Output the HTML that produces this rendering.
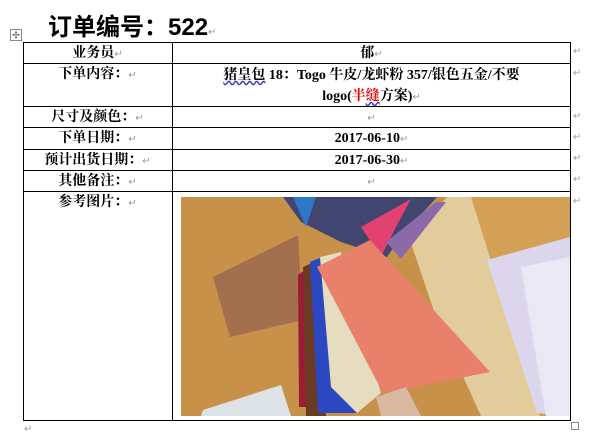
<!DOCTYPE html>
<html><head><meta charset="utf-8"><style>
body{margin:0;width:601px;height:443px;background:#fff;position:relative;overflow:hidden;font-family:"Liberation Serif","Noto Serif CJK SC",serif;}
.a{position:absolute;}
.h{background:#000;height:1px;}
.v{background:#000;width:1px;}
.t{position:absolute;font-weight:bold;font-size:14px;color:#000;white-space:nowrap;text-align:center;line-height:20px;padding-top:2px;}
.m{color:#999;font-size:10px;font-weight:normal;}
</style></head><body>
<div class="a" style="left:48px;top:7px;font:bold 24px 'Liberation Sans','Noto Sans CJK SC',sans-serif;">订单编号：522<span class="m">↵</span></div>
<div class="a" style="left:10px;top:29px;width:10px;height:10px;border:1px solid #888;font-size:9px;line-height:10px;text-align:center;color:#555;">✣</div>
<div class="a h" style="left:23px;top:42px;width:548px"></div>
<div class="a h" style="left:23px;top:63px;width:548px"></div>
<div class="a h" style="left:23px;top:106px;width:548px"></div>
<div class="a h" style="left:23px;top:127px;width:548px"></div>
<div class="a h" style="left:23px;top:149px;width:548px"></div>
<div class="a h" style="left:23px;top:170px;width:548px"></div>
<div class="a h" style="left:23px;top:191px;width:548px"></div>
<div class="a h" style="left:23px;top:420px;width:548px"></div>
<div class="a v" style="left:23px;top:42px;height:379px"></div>
<div class="a v" style="left:172px;top:42px;height:379px"></div>
<div class="a v" style="left:570px;top:42px;height:379px"></div>
<div class="t" style="left:23px;width:149px;top:42px">业务员<span class="m">↵</span></div>
<div class="t" style="left:23px;width:149px;top:63px">下单内容：<span class="m">↵</span></div>
<div class="t" style="left:23px;width:149px;top:106px">尺寸及颜色：<span class="m">↵</span></div>
<div class="t" style="left:23px;width:149px;top:127px">下单日期：<span class="m">↵</span></div>
<div class="t" style="left:23px;width:149px;top:149px">预计出货日期：<span class="m">↵</span></div>
<div class="t" style="left:23px;width:149px;top:170px">其他备注：<span class="m">↵</span></div>
<div class="t" style="left:23px;width:149px;top:191px">参考图片：<span class="m">↵</span></div>
<div class="t" style="left:173px;width:397px;top:42px">郁<span class="m">↵</span></div>
<div class="t" style="left:173px;width:397px;top:63px;line-height:21px"><span style="text-decoration:underline wavy #33c">猪皇包</span> 18：Togo 牛皮/龙虾粉 357/银色五金/不要<br>logo(<span style="color:#e00">半</span><span style="color:#e00;text-decoration:underline wavy #33c">缝</span>方案)<span class="m">↵</span></div>
<div class="t" style="left:173px;width:397px;top:106px"><span class="m">↵</span></div>
<div class="t" style="left:173px;width:397px;top:127px">2017-06-10<span class="m">↵</span></div>
<div class="t" style="left:173px;width:397px;top:149px">2017-06-30<span class="m">↵</span></div>
<div class="t" style="left:173px;width:397px;top:170px"><span class="m">↵</span></div>
<div class="a m" style="left:573px;top:46px">↵</div><div class="a m" style="left:573px;top:68px">↵</div><div class="a m" style="left:573px;top:111px">↵</div><div class="a m" style="left:573px;top:132px">↵</div><div class="a m" style="left:573px;top:153px">↵</div><div class="a m" style="left:573px;top:174px">↵</div><div class="a m" style="left:573px;top:196px">↵</div>
<div class="a m" style="left:24px;top:424px">↵</div>
<div class="a" style="left:571px;top:422px;width:6px;height:6px;border:1px solid #888"></div>
<svg class="a" style="left:181px;top:197px" width="389" height="219" viewBox="0 0 389 219">
<rect width="389" height="219" fill="#c8914a"/>
<polygon points="229,43 266,0 389,0 389,219 300,219" fill="#d4a055"/>
<polygon points="229,43 266,0 290,0 359,219 300,219 255,120" fill="#e2cc9c"/>
<polygon points="306,63 389,40 389,219 356,216" fill="#dcd6ec"/>
<polygon points="340,70 389,60 389,219 365,219" fill="#ebe8f5"/>
<polygon points="102,0 256,0 220,40 206,60 160,45 120,25" fill="#40466f"/>
<polygon points="112,0 135,0 125,30" fill="#2f77c9"/>
<polygon points="180,30 230,2 215,30 200,60" fill="#e3416f"/>
<polygon points="205,45 255,5 265,5 220,62" fill="#8a6aa8"/>
<polygon points="32,80 117,38 122,123 49,140" fill="#a3704f"/>
<polygon points="117,78 128,70 133,210 118,210" fill="#9b1d35"/>
<polygon points="122,70 140,62 145,219 125,219" fill="#6b3a22"/>
<polygon points="129,65 146,58 176,216 137,216" fill="#2c48c0"/>
<polygon points="139,60 160,55 200,196 176,216 150,190" fill="#e6dcc0"/>
<polygon points="136,70 189,43 309,175 202,196" fill="#e8806a"/>
<polygon points="195,200 225,190 240,219 200,219" fill="#d8b8a0"/>
<polygon points="22,213 100,188 110,219 20,219" fill="#dde2e7"/>
</svg>
</body></html>
